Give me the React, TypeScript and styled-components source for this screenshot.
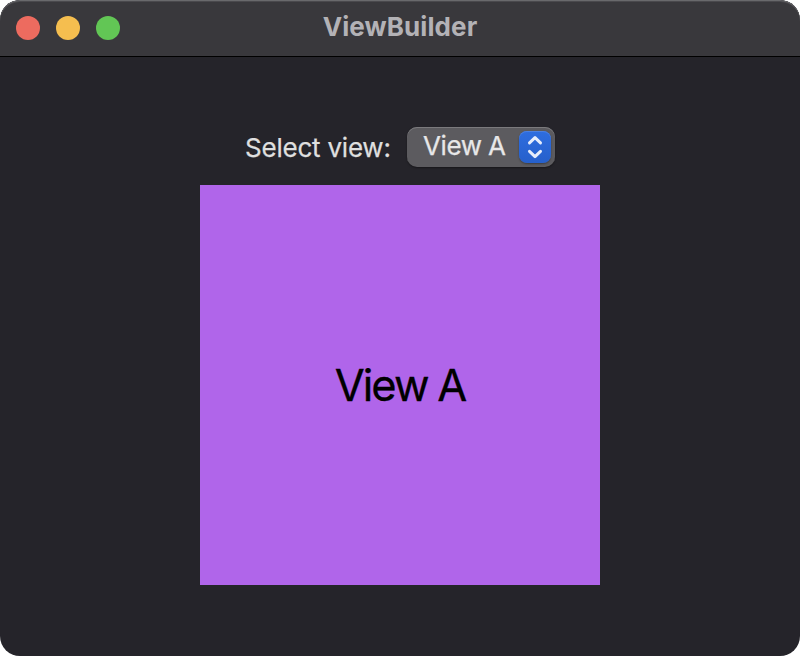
import React from "react";
import styled, { createGlobalStyle } from "styled-components";

const GlobalStyle = createGlobalStyle`
  *, *::before, *::after { box-sizing: border-box; }
  html, body { margin: 0; background: #fff; }
  body { font-family: Inter, "Liberation Sans", sans-serif; -webkit-font-smoothing: antialiased; }
`;

const Window = styled.main`
  width: 800px;
  height: 656px;
  display: flex;
  flex-direction: column;
  overflow: hidden;
  border-radius: 20px;
  background: #25242a;
`;

const TitleBar = styled.header`
  height: 57px;
  flex: none;
  display: grid;
  grid-template-columns: 160px 1fr 160px;
  background: #39383c;
  border-bottom: 1px solid #000;
  border-radius: 20px 20px 0 0;
  box-shadow: inset 0 1px 0 #69696c, inset 0 2px 0 #4a494d;
`;

const TrafficLights = styled.div`
  display: flex;
  gap: 16px;
  padding: 16px 0 0 16px;
`;

const Light = styled.span<{ $color: string }>`
  width: 24px;
  height: 24px;
  border-radius: 50%;
  background: ${({ $color }) => $color};
`;

const Title = styled.h1`
  margin: 0;
  text-align: center;
  font-size: 26px;
  font-weight: 700;
  line-height: 53px;
  letter-spacing: 0.1px;
  color: #b3b2b6;
`;

const Content = styled.section`
  flex: 1;
  display: flex;
  flex-direction: column;
  align-items: center;
  gap: 18px;
  padding-top: 70px;
`;

const PickerRow = styled.div`
  width: 310px;
  height: 40px;
  display: flex;
  justify-content: space-between;
`;

const ControlText = styled.span`
  font-size: 26px;
  font-weight: 400;
  -webkit-text-stroke: 0.25px currentColor;
  white-space: nowrap;
`;

const Label = styled(ControlText)`
  line-height: 41px;
  letter-spacing: -0.22px;
  color: #dfdfdf;
`;

const PopUpButton = styled.button`
  width: 148px;
  height: 40px;
  display: flex;
  justify-content: space-between;
  padding: 4px 4px 4px 16px;
  border: 0;
  border-radius: 10px;
  background: #5c5b5f;
  box-shadow: inset 0 1px 0 #7b7a7d, 0 1px 2px rgba(0, 0, 0, 0.4);
  font: inherit;
`;

const Value = styled(ControlText)`
  line-height: 29px;
  letter-spacing: -0.4px;
  word-spacing: -0.5px;
  color: #e7e7e8;
`;

const Stepper = styled.span`
  width: 32px;
  height: 32px;
  display: grid;
  place-items: center;
  border-radius: 8px;
  background: linear-gradient(#2e6ddf, #2660cb);
  box-shadow: inset 0 1px 0 #4a80e2, 0 1px 2px rgba(0, 0, 0, 0.35);
`;

const ViewPanel = styled.div`
  width: 400px;
  height: 400px;
  display: grid;
  place-items: center;
  background: #b065ea;
  color: #000;
  font-size: 43.5px;
  font-weight: 400;
  -webkit-text-stroke: 0.3px currentColor;
  line-height: 55px;
  letter-spacing: -2px;
  word-spacing: -0.5px;
`;

const lights = ["#ed6b5f", "#f5be4f", "#62c655"];

export default function App() {
  return (
    <>
      <GlobalStyle />
      <Window>
        <TitleBar>
          <TrafficLights>
            {lights.map((color) => (
              <Light key={color} $color={color} />
            ))}
          </TrafficLights>
          <Title>ViewBuilder</Title>
        </TitleBar>
        <Content>
          <PickerRow>
            <Label>Select view:</Label>
            <PopUpButton type="button">
              <Value>View A</Value>
              <Stepper>
                <svg width="32" height="32" viewBox="0 0 32 32" fill="none" stroke="#e6edfb" strokeWidth="3" strokeLinecap="round" strokeLinejoin="round">
                  <path d="M10.5 11.9 16 6.7 21.5 11.9M10.5 20.4 16 25.6 21.5 20.4" />
                </svg>
              </Stepper>
            </PopUpButton>
          </PickerRow>
          <ViewPanel>View A</ViewPanel>
        </Content>
      </Window>
    </>
  );
}
